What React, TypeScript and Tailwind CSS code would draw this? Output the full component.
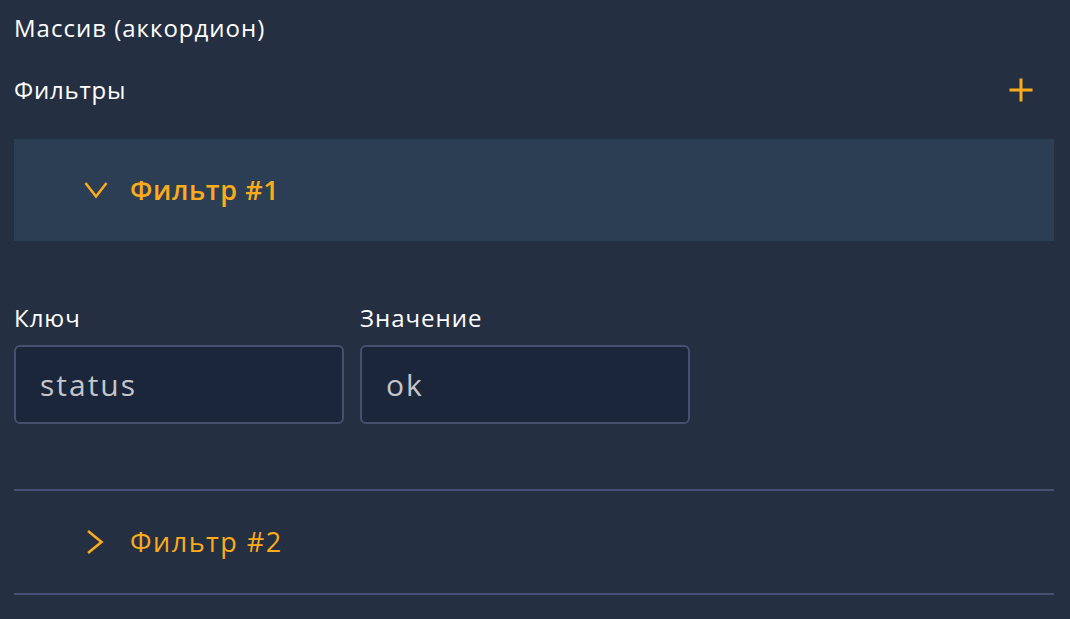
const font = { fontFamily: '"Open Sans", "Noto Sans", sans-serif' };

function Field({ label, value }: { label: string; value: string }) {
  return (
    <div className="flex w-[330px] flex-col">
      <div className="text-[24px] leading-[30px] tracking-[1px] text-white">{label}</div>
      <div className="mt-[12px] flex h-[79px] items-center rounded-[6px] border-2 border-[#46516d] bg-[#1b263a] px-[24px] text-[30px] tracking-[2px] text-[#c4c6cc]">
        {value}
      </div>
    </div>
  );
}

export default function App() {
  return (
    <div
      className="h-[619px] w-[1070px] overflow-hidden bg-[#252f42] pl-[14px] pr-[16px] pt-[12px]"
      style={font}
    >
      {/* Title */}
      <div className="text-[24px] leading-[32px] tracking-[1px] text-white">
        Массив (аккордион)
      </div>

      {/* Filters header */}
      <div className="mt-[26px] flex h-[40px] items-center justify-between pr-[21px]">
        <span className="text-[24px] tracking-[0.8px] text-white">Фильтры</span>
        <svg width="24" height="24" viewBox="0 0 24 24" fill="none">
          <path d="M12 0.5V23.5M0.5 12H23.5" stroke="#fbab1b" strokeWidth="3" />
        </svg>
      </div>

      {/* Filter #1 (open) */}
      <div className="mt-[29px] flex h-[102px] items-center bg-[#2c3e54] pl-[70px]">
        <svg width="24" height="18" viewBox="0 0 24 18" fill="none">
          <polyline points="1.5,2 12,15.5 22.5,2" stroke="#fbab1b" strokeWidth="2.6" />
        </svg>
        <span className="ml-[22px] text-[27px] font-semibold tracking-[0.6px] text-[#fbab1b]">
          Фильтр #1
        </span>
      </div>

      <div className="mt-[62px] flex gap-[16px]">
        <Field label="Ключ" value="status" />
        <Field label="Значение" value="ok" />
      </div>

      {/* Filter #2 (closed) */}
      <div className="mt-[65px] flex h-[106px] items-center border-y-2 border-[#465174] pl-[72px]">
        <svg width="18" height="24" viewBox="0 0 18 24" fill="none">
          <polyline points="2,1 15.5,12 2,23" stroke="#fbab1b" strokeWidth="2.6" />
        </svg>
        <span className="ml-[26px] text-[27px] tracking-[1.5px] text-[#fbab1b]">Фильтр #2</span>
      </div>
    </div>
  );
}
